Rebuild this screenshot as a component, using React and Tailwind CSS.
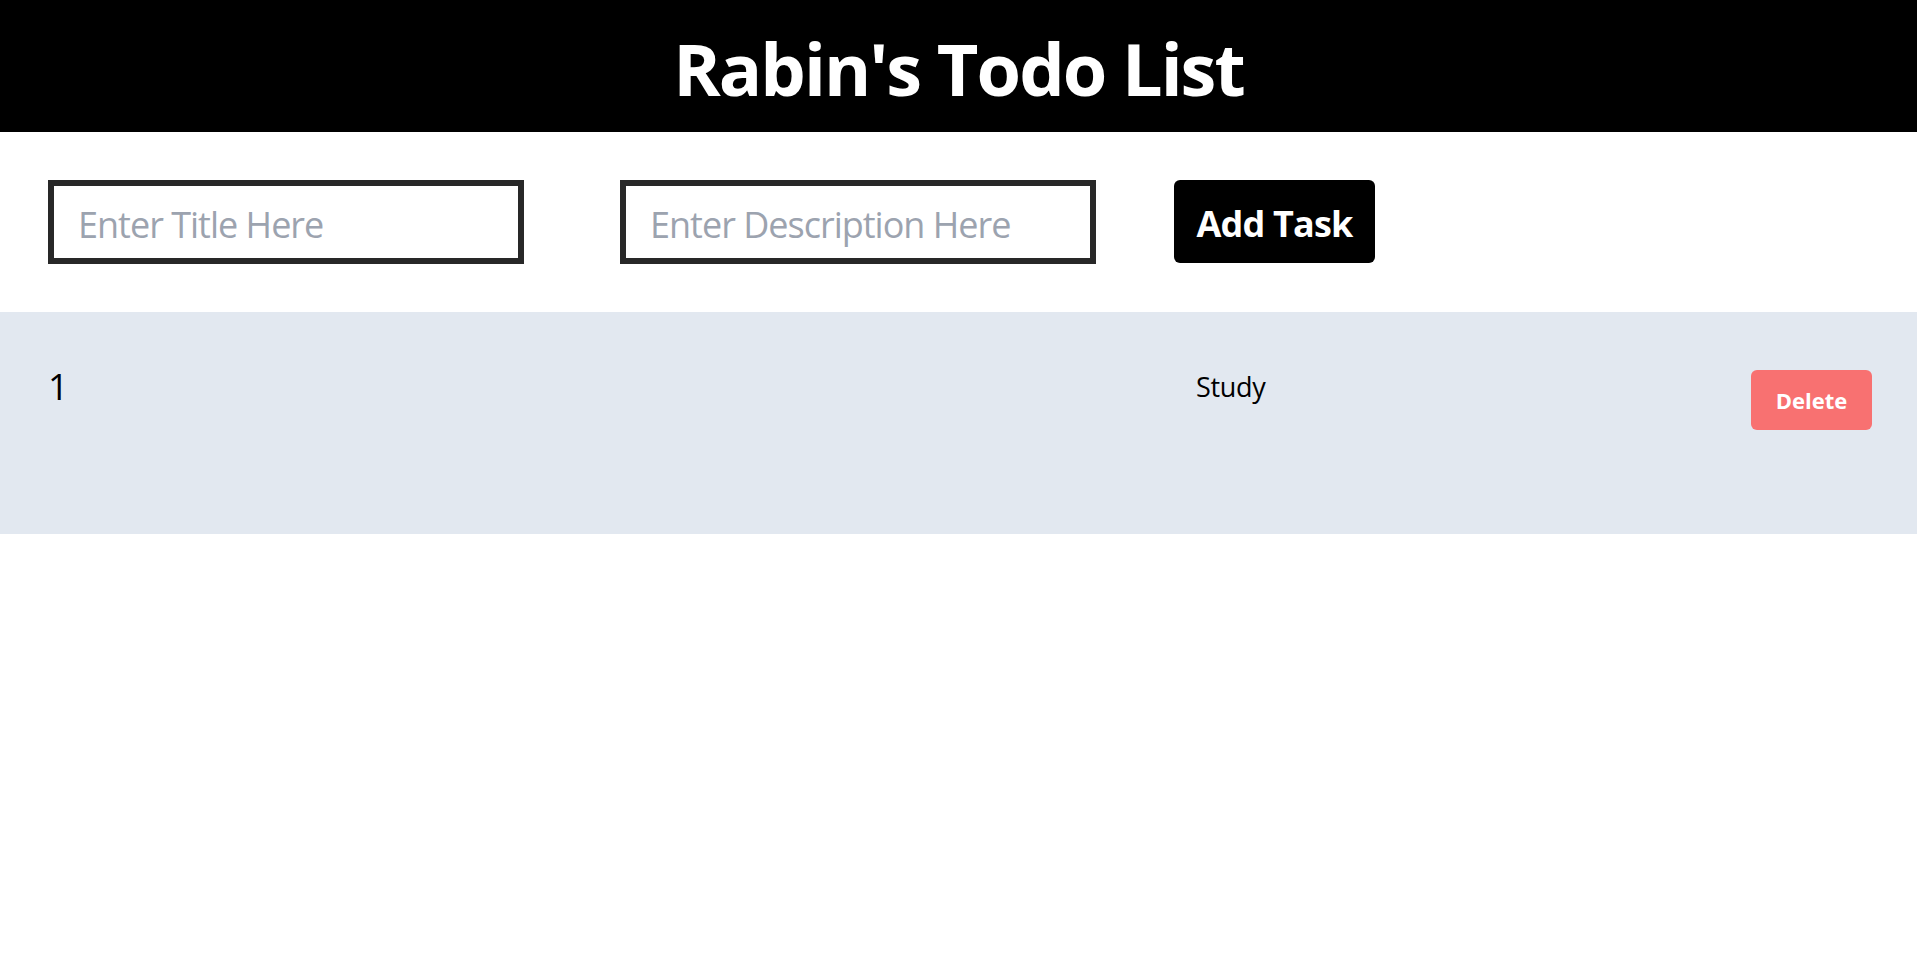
import React, { useState } from "react";

const App = () => {
  const [title, setTitle] = useState("");
  const [desc, setDesc] = useState("");
  const [tasks, setTasks] = useState([{ title: "Study", desc: "" }]);

  const addTask = () => {
    if (!title) return;
    setTasks([...tasks, { title, desc }]);
    setTitle("");
    setDesc("");
  };

  const deleteTask = (i) => {
    setTasks(tasks.filter((_, idx) => idx !== i));
  };

  return (
    <div className="min-h-screen bg-white font-['Open_Sans',sans-serif] text-black">
      <h1 className="flex h-[132px] items-center justify-center bg-black pt-[4px] text-7xl font-bold tracking-[-2px] text-white">
        Rabin's Todo List
      </h1>

      <div className="flex items-start p-12">
        <input
          type="text"
          value={title}
          onChange={(e) => setTitle(e.target.value)}
          placeholder="Enter Title Here"
          className="h-[84px] w-[476px] border-[6px] border-[#282828] px-6 pt-[4px] text-4xl tracking-[-1px] placeholder:text-[#9ca3af] outline-none"
        />
        <input
          type="text"
          value={desc}
          onChange={(e) => setDesc(e.target.value)}
          placeholder="Enter Description Here"
          className="ml-24 h-[84px] w-[476px] border-[6px] border-[#282828] px-6 pt-[4px] text-4xl tracking-[-1px] placeholder:text-[#9ca3af] outline-none"
        />
        <button
          onClick={addTask}
          className="ml-[78px] h-[83px] w-[201px] cursor-pointer rounded-md bg-black pt-[5px] text-4xl font-bold tracking-[-0.8px] text-white"
        >
          Add Task
        </button>
      </div>

      <div>
        {tasks.map((task, i) => (
          <div
            key={i}
            className="flex h-[222px] items-start bg-[#e2e8f0] pt-12 pr-[45px] pl-12"
          >
            <p className="flex-1 pt-[7px] text-4xl">{i + 1}</p>
            <div className="w-[555px] pt-[7px]">
              <p className="text-[27px] font-medium tracking-[-0.3px]">{task.title}</p>
              <p className="text-xl">{task.desc}</p>
            </div>
            <button
              onClick={() => deleteTask(i)}
              className="mt-[10px] h-[60px] w-[121px] cursor-pointer rounded-md bg-[#f87171] text-[22px] font-bold text-white"
            >
              Delete
            </button>
          </div>
        ))}
      </div>
    </div>
  );
};

export default App;
